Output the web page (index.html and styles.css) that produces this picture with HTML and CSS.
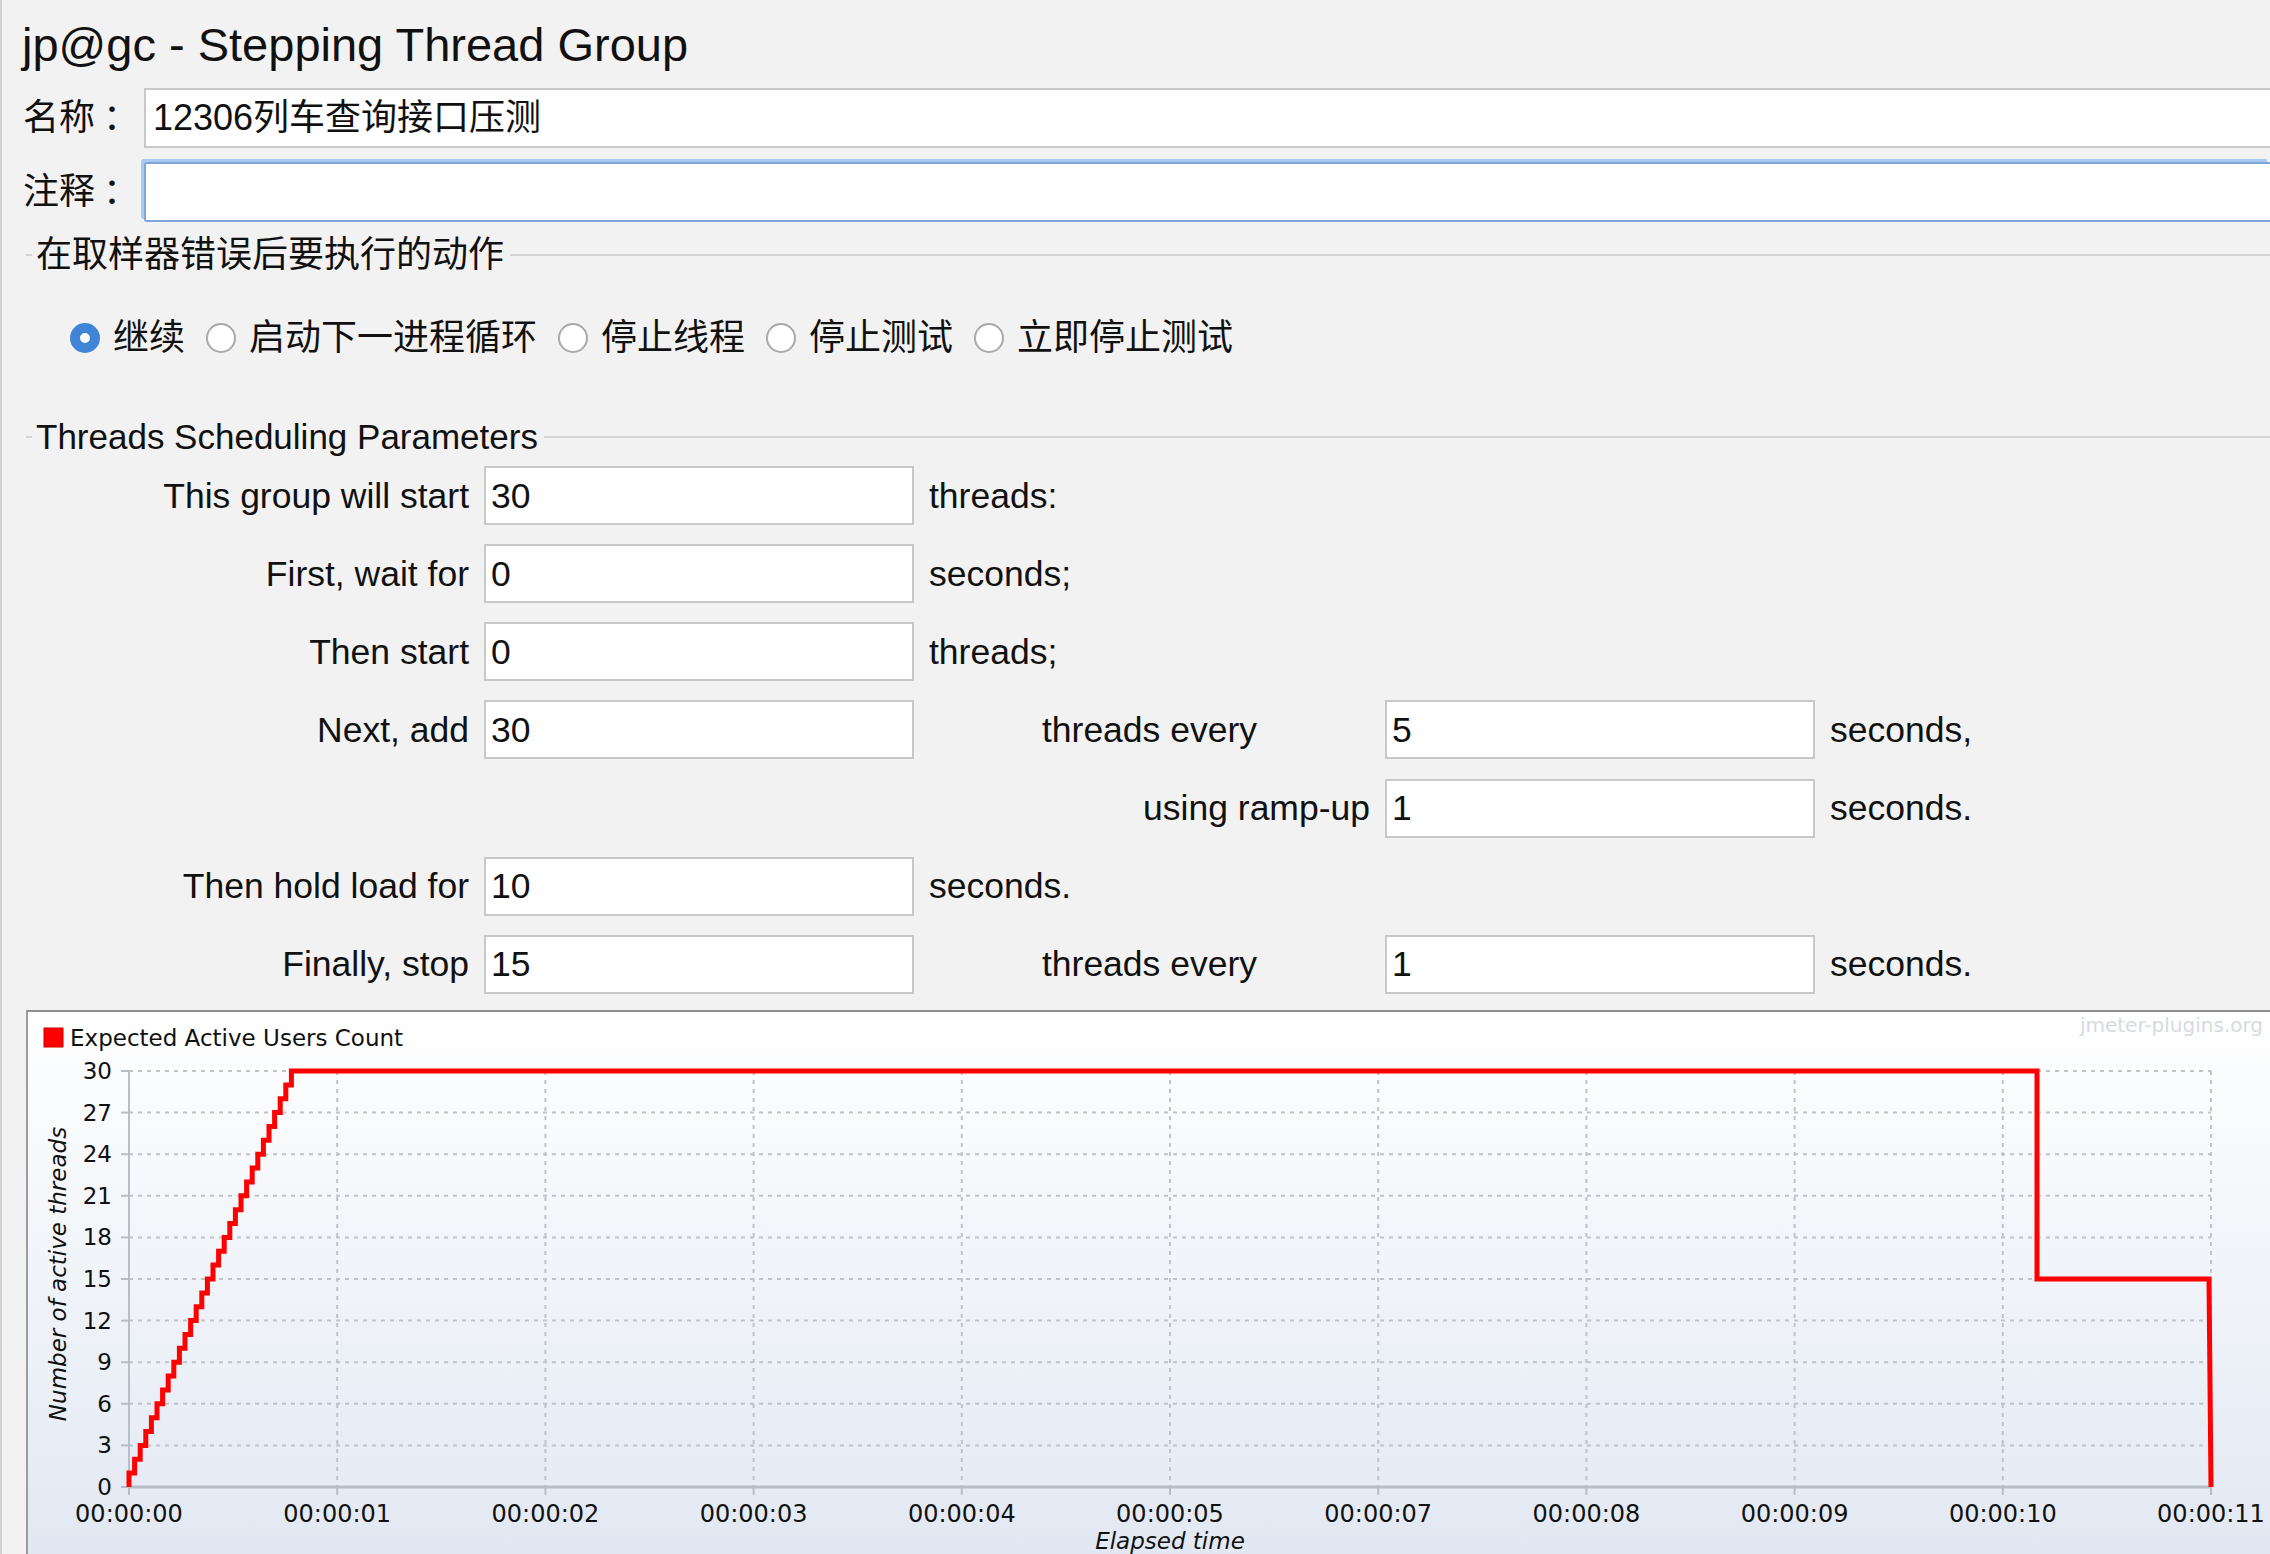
FILE: index.html
```html
<!DOCTYPE html>
<html lang="zh">
<head>
<meta charset="utf-8">
<title>jp@gc - Stepping Thread Group</title>
<link rel="stylesheet" href="styles.css">
</head>
<body>
<div class="page">
  <h1 class="title">jp@gc - Stepping Thread Group</h1>

  <div class="field-row name-row">
    <span class="field-label">名称<span class="colon">：</span></span>
    <div class="text-input">12306列车查询接口压测</div>
  </div>
  <div class="field-row">
    <span class="field-label">注释<span class="colon">：</span></span>
    <div class="text-input focused"></div>
  </div>

  <div class="section-head section-actions"><span>在取样器错误后要执行的动作</span></div>
  <div class="radio-group">
    <div class="radio"><span class="radio-dot checked"></span><span>继续</span></div>
    <div class="radio"><span class="radio-dot"></span><span>启动下一进程循环</span></div>
    <div class="radio"><span class="radio-dot"></span><span>停止线程</span></div>
    <div class="radio"><span class="radio-dot"></span><span>停止测试</span></div>
    <div class="radio"><span class="radio-dot"></span><span>立即停止测试</span></div>
  </div>

  <div class="section-head section-threads"><span>Threads Scheduling Parameters</span></div>
  <div class="params">
    <div class="cell p-label c1">This group will start</div>
    <div class="cell p-input c2">30</div>
    <div class="cell p-unit c3">threads:</div>

    <div class="cell p-label c1">First, wait for</div>
    <div class="cell p-input c2">0</div>
    <div class="cell p-unit c3">seconds;</div>

    <div class="cell p-label c1">Then start</div>
    <div class="cell p-input c2">0</div>
    <div class="cell p-unit c3">threads;</div>

    <div class="cell p-label c1">Next, add</div>
    <div class="cell p-input c2">30</div>
    <div class="cell p-mid c3">threads every</div>
    <div class="cell p-input c4">5</div>
    <div class="cell p-unit c5">seconds,</div>

    <div class="cell p-mid right c3">using ramp-up</div>
    <div class="cell p-input c4">1</div>
    <div class="cell p-unit c5">seconds.</div>

    <div class="cell p-label c1">Then hold load for</div>
    <div class="cell p-input c2">10</div>
    <div class="cell p-unit c3">seconds.</div>

    <div class="cell p-label c1">Finally, stop</div>
    <div class="cell p-input c2">15</div>
    <div class="cell p-mid c3">threads every</div>
    <div class="cell p-input c4">1</div>
    <div class="cell p-unit c5">seconds.</div>
  </div>

  <div class="chart">
    <svg viewBox="0 0 2242 542" xmlns="http://www.w3.org/2000/svg">
      <rect x="16" y="16" width="19" height="19" class="legend-box"/>
      <text x="42" y="34" class="ct">Expected Active Users Count</text>
      <text x="2235" y="20" class="ct watermark" text-anchor="end">jmeter-plugins.org</text>

      <g class="grid">
        <line x1="101" y1="59" x2="2183" y2="59"/>
        <line x1="101" y1="100.6" x2="2183" y2="100.6"/>
        <line x1="101" y1="142.2" x2="2183" y2="142.2"/>
        <line x1="101" y1="183.8" x2="2183" y2="183.8"/>
        <line x1="101" y1="225.4" x2="2183" y2="225.4"/>
        <line x1="101" y1="267" x2="2183" y2="267"/>
        <line x1="101" y1="308.6" x2="2183" y2="308.6"/>
        <line x1="101" y1="350.2" x2="2183" y2="350.2"/>
        <line x1="101" y1="391.8" x2="2183" y2="391.8"/>
        <line x1="101" y1="433.4" x2="2183" y2="433.4"/>
        <line x1="309.2" y1="59" x2="309.2" y2="475"/>
        <line x1="517.4" y1="59" x2="517.4" y2="475"/>
        <line x1="725.6" y1="59" x2="725.6" y2="475"/>
        <line x1="933.8" y1="59" x2="933.8" y2="475"/>
        <line x1="1142" y1="59" x2="1142" y2="475"/>
        <line x1="1350.2" y1="59" x2="1350.2" y2="475"/>
        <line x1="1558.4" y1="59" x2="1558.4" y2="475"/>
        <line x1="1766.6" y1="59" x2="1766.6" y2="475"/>
        <line x1="1974.8" y1="59" x2="1974.8" y2="475"/>
        <line x1="2183" y1="59" x2="2183" y2="475"/>
      </g>

      <g class="axis">
        <line x1="101" y1="59" x2="101" y2="476"/>
        <line x1="100" y1="475" x2="2183" y2="475" class="xaxis"/>
        <line x1="93" y1="59" x2="101" y2="59"/>
        <line x1="93" y1="100.6" x2="101" y2="100.6"/>
        <line x1="93" y1="142.2" x2="101" y2="142.2"/>
        <line x1="93" y1="183.8" x2="101" y2="183.8"/>
        <line x1="93" y1="225.4" x2="101" y2="225.4"/>
        <line x1="93" y1="267" x2="101" y2="267"/>
        <line x1="93" y1="308.6" x2="101" y2="308.6"/>
        <line x1="93" y1="350.2" x2="101" y2="350.2"/>
        <line x1="93" y1="391.8" x2="101" y2="391.8"/>
        <line x1="93" y1="433.4" x2="101" y2="433.4"/>
        <line x1="93" y1="475" x2="101" y2="475"/>
        <line x1="101" y1="475" x2="101" y2="483"/>
        <line x1="309.2" y1="475" x2="309.2" y2="483"/>
        <line x1="517.4" y1="475" x2="517.4" y2="483"/>
        <line x1="725.6" y1="475" x2="725.6" y2="483"/>
        <line x1="933.8" y1="475" x2="933.8" y2="483"/>
        <line x1="1142" y1="475" x2="1142" y2="483"/>
        <line x1="1350.2" y1="475" x2="1350.2" y2="483"/>
        <line x1="1558.4" y1="475" x2="1558.4" y2="483"/>
        <line x1="1766.6" y1="475" x2="1766.6" y2="483"/>
        <line x1="1974.8" y1="475" x2="1974.8" y2="483"/>
        <line x1="2183" y1="475" x2="2183" y2="483"/>
      </g>

      <g class="ct" text-anchor="end">
        <text x="84" y="67">30</text>
        <text x="84" y="108.6">27</text>
        <text x="84" y="150.2">24</text>
        <text x="84" y="191.8">21</text>
        <text x="84" y="233.4">18</text>
        <text x="84" y="275">15</text>
        <text x="84" y="316.6">12</text>
        <text x="84" y="358.2">9</text>
        <text x="84" y="399.8">6</text>
        <text x="84" y="441.4">3</text>
        <text x="84" y="483">0</text>
      </g>

      <g class="ct xl" text-anchor="middle">
        <text x="101" y="510">00:00:00</text>
        <text x="309.2" y="510">00:00:01</text>
        <text x="517.4" y="510">00:00:02</text>
        <text x="725.6" y="510">00:00:03</text>
        <text x="933.8" y="510">00:00:04</text>
        <text x="1142" y="510">00:00:05</text>
        <text x="1350.2" y="510">00:00:07</text>
        <text x="1558.4" y="510">00:00:08</text>
        <text x="1766.6" y="510">00:00:09</text>
        <text x="1974.8" y="510">00:00:10</text>
        <text x="2183" y="510">00:00:11</text>
      </g>

      <text x="1142" y="537" class="ct italic" text-anchor="middle">Elapsed time</text>
      <text transform="translate(38 262) rotate(-90)" class="ct italic" text-anchor="middle">Number of active threads</text>

      <path class="series" d="M101 475 V461.1 H106.6 V447.3 H112.2 V433.4 H117.8 V419.5 H123.4 V405.7 H129 V391.8 H134.6 V377.9 H140.2 V364.1 H145.8 V350.2 H151.4 V336.3 H157 V322.5 H162.6 V308.6 H168.2 V294.7 H173.8 V280.9 H179.4 V267 H185 V253.1 H190.6 V239.3 H196.2 V225.4 H201.8 V211.5 H207.4 V197.7 H213 V183.8 H218.6 V169.9 H224.2 V156.1 H229.8 V142.2 H235.4 V128.3 H241 V114.5 H246.6 V100.6 H252.2 V86.7 H257.8 V72.9 H263.4 V59 H2009 V267 H2181 L2183 475"/>
    </svg>
  </div>
</div>
</body>
</html>
```

FILE: styles.css
```css
html, body {
  margin: 0;
  padding: 0;
}

body {
  width: 2270px;
  height: 1554px;
  overflow: hidden;
  background: #f2f2f2;
  color: #111;
  font-family: "Liberation Sans", "Noto Sans CJK SC", sans-serif;
}

.page {
  box-sizing: border-box;
  height: 100%;
  border-left: 2px solid #d2d2d2;
  overflow: hidden;
}

.title {
  margin: 0 0 16px 0;
  padding: 18px 0 0 20px;
  height: 54px;
  line-height: 54px;
  font-size: 47px;
  font-weight: normal;
}

.field-row {
  display: flex;
  align-items: center;
  height: 60px;
  padding-left: 21px;
}

.name-row {
  margin-bottom: 14px;
}

.field-label {
  flex: none;
  width: 121px;
  font-size: 36px;
  line-height: 40px;
  white-space: nowrap;
}

.colon {
  padding-left: 8px;
}

.text-input {
  box-sizing: border-box;
  flex: 1;
  height: 60px;
  display: flex;
  align-items: center;
  padding-left: 7px;
  background: #fff;
  border: 2px solid #c8c8c8;
  border-right: none;
  font-size: 36px;
  line-height: 40px;
}

.text-input.focused {
  border-color: #7fa6d6;
  border-radius: 3px 0 0 3px;
  box-shadow: -3px -3px 0 0 #a8caef;
}

.section-head {
  display: flex;
  align-items: center;
  height: 40px;
  margin-left: 24px;
  line-height: 40px;
  white-space: nowrap;
}

.section-head::before {
  content: "";
  width: 6px;
  height: 2px;
  margin-right: 4px;
  background: #d4d4d4;
}

.section-head::after {
  content: "";
  flex: 1;
  height: 2px;
  margin-left: 6px;
  background: #d4d4d4;
}

.section-actions {
  margin-top: 13px;
  font-size: 36px;
}

.section-threads {
  margin-top: 64px;
  font-size: 35px;
}

.radio-group {
  display: flex;
  align-items: center;
  gap: 21px;
  height: 30px;
  margin-top: 48px;
  padding-left: 68px;
  font-size: 36px;
  line-height: 40px;
}

.radio {
  display: flex;
  align-items: center;
  gap: 13px;
}

.radio-dot {
  box-sizing: border-box;
  width: 30px;
  height: 30px;
  border-radius: 50%;
  border: 2px solid #a9a9a9;
  background: #fff;
}

.radio-dot.checked {
  border: 10px solid #3f84d6;
}

.params {
  display: grid;
  grid-template-columns: 467px 430px 441px 430px 1fr;
  grid-auto-rows: 59px;
  column-gap: 15px;
  row-gap: 19.17px;
  margin-top: 9px;
  font-size: 35.5px;
  line-height: 40px;
}

.cell {
  display: flex;
  align-items: center;
  white-space: nowrap;
}

.c1 { grid-column: 1; }
.c2 { grid-column: 2; }
.c3 { grid-column: 3; }
.c4 { grid-column: 4; }
.c5 { grid-column: 5; }

.p-label {
  justify-content: flex-end;
}

.p-input {
  box-sizing: border-box;
  padding-left: 5px;
  background: #fff;
  border: 2px solid #c8c8c8;
}

.p-mid {
  justify-content: center;
}

.p-mid.right {
  justify-content: flex-end;
}

.chart {
  box-sizing: border-box;
  height: 544px;
  margin-top: 16px;
  margin-left: 24px;
  border-top: 2px solid #8e8e8e;
  border-left: 2px solid #9c9c9c;
  background: linear-gradient(#ffffff 0%, #f6f8fb 30%, #e2e8f3 100%);
  overflow: hidden;
}

.chart svg {
  display: block;
  width: 2242px;
  height: 542px;
}

.ct {
  font-family: "DejaVu Sans", sans-serif;
  font-size: 23px;
  fill: #111;
}

.xl {
  font-size: 24px;
}

.italic {
  font-style: italic;
}

.watermark {
  font-size: 20px;
  fill: #d6dae1;
}

.legend-box {
  fill: #ff0000;
  stroke: #c80000;
  stroke-width: 1;
}

.grid line {
  stroke: #bfc3cb;
  stroke-width: 2;
  stroke-dasharray: 4 5;
}

.axis line {
  stroke: #b8bec8;
  stroke-width: 2;
}

.axis .xaxis {
  stroke-width: 3;
}

.series {
  fill: none;
  stroke: #ff0000;
  stroke-width: 5;
  stroke-linejoin: miter;
}
```
